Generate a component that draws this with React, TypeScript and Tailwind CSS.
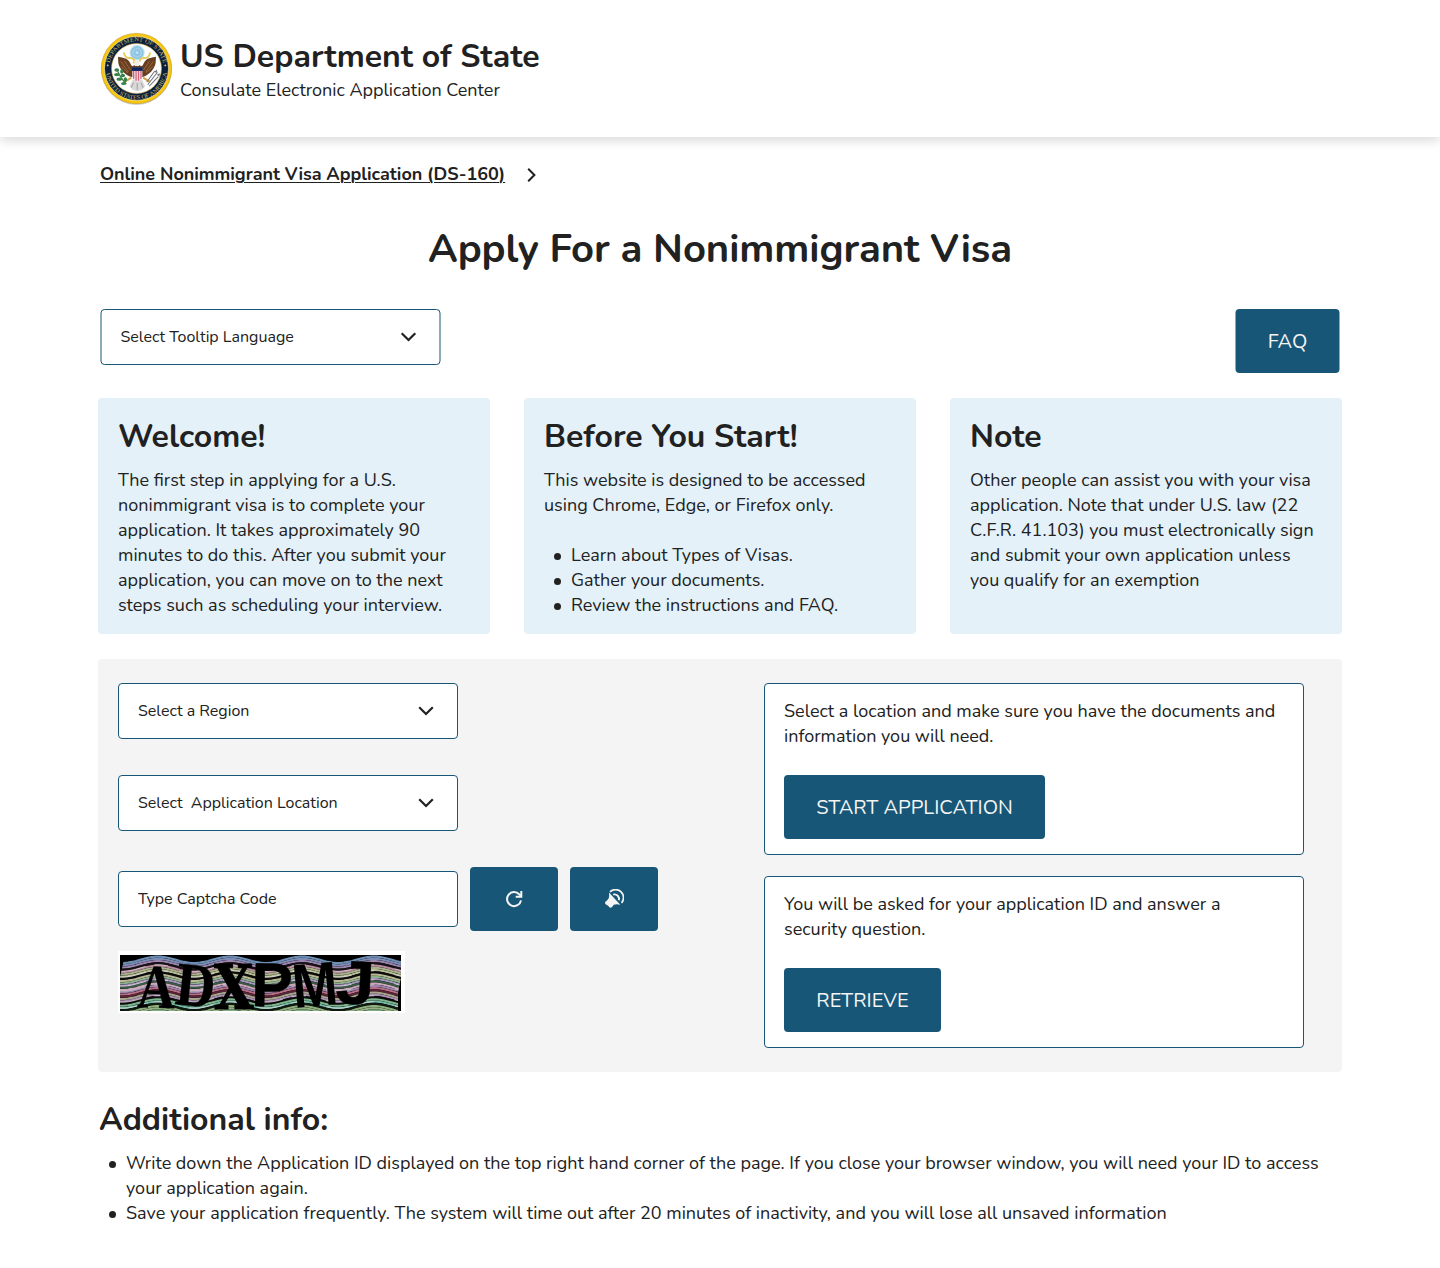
import type { ReactNode } from "react";

function Seal() {
  return (
    <svg className="-mt-px h-[75px] w-[75px] shrink-0" viewBox="0 0 74 74" role="img" aria-label="Department of State seal">
      <defs>
        <path id="seal-top" d="M10.2 37a26.8 26.8 0 0 1 53.6 0" />
        <path id="seal-bottom" d="M6.600 37a30.400 30.400 0 0 0 60.800 0" />
        <filter id="seal-shadow" x="-10%" y="-10%" width="120%" height="120%">
          <feDropShadow dx="0" dy="0.5" stdDeviation="0.6" floodColor="#333" floodOpacity="0.55" />
        </filter>
      </defs>
      <circle cx="37" cy="37" r="34.6" fill="#f9c80f" stroke="#d0a51e" strokeWidth="0.6" filter="url(#seal-shadow)" />
      <circle cx="37" cy="37" r="31.6" fill="#0b1f3f" stroke="#f3e9b0" strokeWidth="0.7" />
      <circle cx="37" cy="37" r="24.600" fill="#fff" stroke="#d8b44a" strokeWidth="0.6" />
      <g fill="#cdbb62" fontFamily="Liberation Serif, serif" fontSize="5.800">
        <text textLength="73" lengthAdjust="spacingAndGlyphs">
          <textPath href="#seal-top" startOffset="5.500">DEPARTMENT OF STATE</textPath>
        </text>
        <text textLength="86" lengthAdjust="spacingAndGlyphs">
          <textPath href="#seal-bottom" startOffset="5">UNITED STATES OF AMERICA</textPath>
        </text>
      </g>
      <circle cx="8.600" cy="34" r="0.9" fill="#f0c93d" />
      <circle cx="65.400" cy="34" r="0.9" fill="#f0c93d" />
      {/* glory */}
      <circle cx="37.6" cy="21.400" r="7" fill="#8fc6e6" stroke="#c5e2f2" strokeWidth="1" />
      <circle cx="37.6" cy="21.400" r="4.200" fill="none" stroke="#c3e2f2" strokeWidth="1" strokeDasharray="1.2 1.1" />
      <circle cx="37.6" cy="21.400" r="1.4" fill="#c3e2f2" />
      {/* scroll */}
      <path d="M24.500 21q1 6 5.500 5.600t5 3.500M50.500 21q-1 6-5.500 5.600t-5 3.500" fill="none" stroke="#e3cf5e" strokeWidth="1.900" />
      {/* eagle */}
      <path d="M18.800 25.500c.2 5 0 8 2.500 11.500 2 3.500 6.200 7 11 8.500h10.400c4.800-1.500 9-5 11-8.500 2.500-3.500 2.300-6.500 2.500-11.500-3.200 1-7.500.8-10.200 3.500-2 2-2 4-3.800 5.800l-4.700-2-4.700 2c-1.800-1.800-1.800-3.800-3.800-5.800-2.700-2.700-7-2.500-10.200-3.500z" fill="#6a3f20" />
      <path d="M21.500 30l7.500 10.500M22 35l6.500 6.500M25 29.500l6 9M53.500 30l-7.500 10.500M53 35l-6.500 6.500M50 29.500l-6 9" stroke="#a77a4c" strokeWidth="0.7" />
      <path d="M35 29.500q2.500-2.500 4.800 0l-.3 5h-4z" fill="#f2efe6" />
      <path d="M34.800 30.300l-2 1.300 2.200.5z" fill="#e0b02a" />
      <path d="M33.500 47.500l-3.500 7 3 3.500 4.800 1.500 4.800-1.500 3-3.500-3.500-7z" fill="#d9d9d9" />
      <path d="M34 51l-2 5M37.700 51v7M41.500 51l2 5" stroke="#888" strokeWidth="0.7" />
      <path d="M32 46l-6.500 4M43.500 46l6.500 4" stroke="#d9a04a" strokeWidth="2" />
      {/* shield */}
      <path d="M32.800 36h10v8q0 4.500-5 6.700-5-2.200-5-6.700z" fill="#f5dfe4" />
      <path d="M34.200 39v8M36.600 39v10M39 39v10M41.400 39v8" stroke="#d0607a" strokeWidth="1.200" />
      <path d="M32.500 35.700h10.600v3.700h-10.600z" fill="#10275a" />
      {/* olive branch */}
      <path d="M17.500 37.500q3 8 9.500 15" fill="none" stroke="#3b7d3f" strokeWidth="1.200" />
      <g fill="#38824a">
        <ellipse cx="17.500" cy="38.500" rx="2.400" ry="1.800" />
        <ellipse cx="22.500" cy="40" rx="1.600" ry="2.200" />
        <ellipse cx="17.600" cy="43" rx="2.800" ry="1.600" />
        <ellipse cx="23.500" cy="44" rx="2.200" ry="1.700" />
        <ellipse cx="20" cy="47.500" rx="2.800" ry="1.700" />
        <ellipse cx="26" cy="48" rx="1.700" ry="2.400" />
        <ellipse cx="24.300" cy="51.800" rx="2.500" ry="1.600" />
      </g>
      {/* arrows */}
      <path d="M48 53l9.500-12M49.500 54.500l9-9.500M47 50.500l8-11" stroke="#6d7078" strokeWidth="1" />
      <path d="M54.500 40.500l2.500-2.500.8 3.500zM57 43l3.200-1.200-.7 3.400z" fill="#7b7e85" />
    </svg>
  );
}

function ChevronDown() {
  return (
    <svg className="h-[10px] w-4" viewBox="0 0 16 10" fill="none" stroke="#212121" strokeWidth="2.200">
      <path d="M1.200 1.200 8 8l6.800-6.800" />
    </svg>
  );
}

function SelectBox({ label, className = "" }: { label: string; className?: string }) {
  return (
    <button
      className={
        "flex h-14 w-[340px] items-center justify-between rounded-[4px] border border-[#175676] bg-white pr-[23px] pl-[19px] text-base whitespace-pre " +
        className
      }
    >
      <span>{label}</span>
      <ChevronDown />
    </button>
  );
}

function ActionButton({ children, className = "" }: { children: ReactNode; className?: string }) {
  return (
    <button
      className={
        "flex h-16 items-center justify-center rounded-[4px] bg-[#175676] text-xl text-[#f4f4f4] " + className
      }
    >
      {children}
    </button>
  );
}

function InfoCard({ title, children }: { title: string; children: ReactNode }) {
  return (
    <section className="h-[236px] w-[392px] rounded-[4px] bg-[#e4f1f9] px-5 pt-[17px]">
      <h2 className="text-[32px] leading-[44px] font-bold">{title}</h2>
      <div className="mt-[9px] text-lg leading-[25px]">{children}</div>
    </section>
  );
}

function BulletList({ items, className = "" }: { items: ReactNode[]; className?: string }) {
  return (
    <ul className={"text-lg leading-[25px] " + className}>
      {items.map((item, i) => (
        <li key={i} className="flex gap-[10px] pl-[10px]">
          <span className="mt-[10px] size-[7px] shrink-0 rounded-full bg-[#212121]" />
          <span className="flex-1">{item}</span>
        </li>
      ))}
    </ul>
  );
}

const waveColors = [
  "#6d8fb5", "#7d8cb4", "#9a86b0", "#1a1216", "#b98aa0", "#a9b08c", "#b9bf98", "#0c0c0c", "#b8b894", "#8fb08f",
  "#a596bb", "#3a5a48", "#c9a9b8", "#9c84ae", "#b56f86", "#5a2436", "#a8a58f", "#a98fb0", "#0c0c0c", "#7fb58e",
  "#74b8a4", "#111811", "#8fb07c", "#93b184", "#7fae80",
];

const captchaGlyphs = [
  { ch: "A", x: 17, y: 52, sx: 0.84, rot: 2, family: "Liberation Serif, serif", stroke: 0.3 },
  { ch: "D", x: 54, y: 49, sx: 0.88, rot: 6, family: "Liberation Serif, serif", stroke: 0.3 },
  { ch: "X", x: 94, y: 54, sx: 0.82, rot: 0, family: "DejaVu Serif, serif", stroke: 1 },
  { ch: "P", x: 131, y: 51, sx: 1, rot: 1, family: "Liberation Sans, sans-serif", stroke: 0.5 },
  { ch: "M", x: 174, y: 53, sx: 0.88, rot: -5, family: "Liberation Sans, sans-serif", stroke: 0 },
  { ch: "J", x: 215, y: 48, sx: 1.12, rot: 3, family: "Liberation Sans, sans-serif", stroke: 0.5 },
];

function wave(y: number) {
  let d = "";
  for (let x = 0; x <= 284; x += 4) {
    const dy = -3.2 * Math.cos(((x - 38) * 2 * Math.PI) / 72);
    d += (x === 0 ? "M" : "L") + x + " " + (y + dy).toFixed(1);
  }
  return d;
}

function Captcha() {
  return (
    <div className="mt-5 h-[62px] w-[287px] bg-white pt-1 pl-[2px]">
      <svg className="h-14 w-[281px]" viewBox="0 0 281 56" role="img" aria-label="Captcha code">
        <rect width="281" height="56" fill="#000" />
        {waveColors.map((color, i) => (
          <path key={i} d={wave(4.8 + i * 2.25)} fill="none" stroke={color} strokeWidth="2.100" />
        ))}
        {[13, 19, 28, 33, 44, 50].map((y) => (
          <path key={y} d={wave(y)} fill="none" stroke="#e6dfe2" strokeWidth="0.7" strokeDasharray="26 9 14 21" />
        ))}
        <path d="M0 0h5l-5 22zM281 22l-3 16v18h3z" fill="#000" />
        {captchaGlyphs.map((g) => (
          <text
            key={g.ch}
            fontFamily={g.family}
            fontSize="62"
            fontWeight="700"
            transform={`translate(${g.x} ${g.y}) rotate(${g.rot}) scale(${g.sx} 1)`}
            fill="#000"
            stroke="#000"
            strokeWidth={g.stroke}
          >
            {g.ch}
          </text>
        ))}
      </svg>
    </div>
  );
}

function RefreshIcon() {
  return (
    <svg className="size-5" viewBox="0 0 20 20" fill="none" stroke="#f4f4f4" strokeWidth="2">
      <path d="M17 11.300A7 7 0 1 1 15.200 5.300L17 7" />
      <path d="M17.300 2v5.800h-5.600" />
    </svg>
  );
}

function SpeakerIcon() {
  return (
    <svg className="size-5" viewBox="0 0 20 20">
      <path
        d="M5 3.500 16.300 15.700Q12 15 9.800 15.800L8.800 17Q8.300 18.800 6.200 18.800L4.900 17.800 4 16.500 2.500 16 1 14.300Q.8 12.500 2.500 12L4.600 9.500Q5.500 7 5 3.500Z"
        fill="#f4f4f4"
      />
      <path d="M6 2.800A8 8 0 0 1 17.500 13.900" fill="none" stroke="#f4f4f4" strokeWidth="1.700" />
      <path d="M9.200 5.600A4.500 4.500 0 0 1 14.800 11.300" fill="none" stroke="#f4f4f4" strokeWidth="1.900" />
    </svg>
  );
}

export default function App() {
  return (
    <div className="min-h-[1268px] w-[1440px] bg-white font-['Nunito','Lato',sans-serif] text-[#212121]">
      <header className="flex h-[137px] items-center gap-[6px] bg-white pl-[99px] shadow-[0_4px_10px_rgba(0,0,0,0.14)]">
        <Seal />
        <div>
          <h1 className="pt-px text-[32px] leading-[44px] font-bold">US Department of State</h1>
          <p className="-mt-px text-lg leading-[25px]">Consulate Electronic Application Center</p>
        </div>
      </header>

      <nav className="flex items-center gap-[22px] pt-[25px] pl-[100px]">
        <a className="text-lg leading-[25px] font-bold tracking-[-0.03px] underline decoration-1 underline-offset-2">
          Online Nonimmigrant Visa Application (DS-160)
        </a>
        <svg className="h-[14px] w-[9px]" viewBox="0 0 9 14" fill="none" stroke="#212121" strokeWidth="2">
          <path d="M1.200 .8 7.400 7 1.200 13.200" />
        </svg>
      </nav>

      <main className="px-[98px]">
        <h2 className="mt-[35px] text-center text-[40px] leading-[55px] font-bold tracking-[-0.07px]">
          Apply For a Nonimmigrant Visa
        </h2>

        <div className="mt-8 flex items-start justify-between pr-[3px] pl-[2px]">
          <SelectBox label="Select Tooltip Language" className="translate-x-[0.5px]" />
          <ActionButton className="w-[104px] translate-x-[0.5px] pt-px">FAQ</ActionButton>
        </div>

        <div className="mt-[25px] flex justify-between">
          <InfoCard title="Welcome!">
            The first step in applying for a U.S.
            <br />
            nonimmigrant visa is to complete your
            <br />
            application. It takes approximately 90
            <br />
            minutes to do this. After you submit your
            <br />
            application, you can move on to the next
            <br />
            steps such as scheduling your interview.
          </InfoCard>
          <InfoCard title="Before You Start!">
            <p>
              This website is designed to be accessed
              <br />
              using Chrome, Edge, or Firefox only.
            </p>
            <BulletList
              className="mt-[25px]"
              items={["Learn about Types of Visas.", "Gather your documents.", "Review the instructions and FAQ."]}
            />
          </InfoCard>
          <InfoCard title="Note">
            Other people can assist you with your visa
            <br />
            application. Note that under U.S. law (22
            <br />
            C.F.R. 41.103) you must electronically sign
            <br />
            and submit your own application unless
            <br />
            you qualify for an exemption
          </InfoCard>
        </div>

        <div className="mt-[25px] flex h-[413px] justify-between rounded-[4px] bg-[#f4f4f4] pt-6 pr-[38px] pl-5">
          <div>
            <SelectBox label="Select a Region" />
            <SelectBox label="Select  Application Location" className="mt-9" />
            <div className="mt-9 flex items-center gap-3">
              <input
                className="h-14 w-[340px] rounded-[4px] border border-[#175676] bg-white px-[19px] text-base placeholder:text-[#212121] placeholder:opacity-100"
                placeholder="Type Captcha Code"
              />
              <ActionButton className="w-[88px]">
                <RefreshIcon />
              </ActionButton>
              <ActionButton className="w-[88px]">
                <SpeakerIcon />
              </ActionButton>
            </div>
            <Captcha />
          </div>

          <div className="flex w-[540px] flex-col gap-[21px]">
            <section className="h-[172px] rounded-[4px] border border-[#175676] bg-white px-[19px] pt-[15px]">
              <p className="text-lg leading-[25px]">
                Select a location and make sure you have the documents and
                <br />
                information you will need.
              </p>
              <ActionButton className="mt-[26px] w-[261px] pt-[2px]">START APPLICATION</ActionButton>
            </section>
            <section className="h-[172px] rounded-[4px] border border-[#175676] bg-white px-[19px] pt-[15px]">
              <p className="text-lg leading-[25px]">
                You will be asked for your application ID and answer a
                <br />
                security question.
              </p>
              <ActionButton className="mt-[26px] w-[157px] pt-[2px]">RETRIEVE</ActionButton>
            </section>
          </div>
        </div>

        <h2 className="mt-[26px] pl-px text-[32px] leading-[44px] font-bold">Additional info:</h2>
        <BulletList
          className="mt-[9px] pl-px"
          items={[
            <>
              Write down the Application ID displayed on the top right hand corner of the page. If you close your
              browser window, you will need your ID to access
              <br />
              your application again.
            </>,
            "Save your application frequently. The system will time out after 20 minutes of inactivity, and you will lose all unsaved information",
          ]}
        />
      </main>
    </div>
  );
}
